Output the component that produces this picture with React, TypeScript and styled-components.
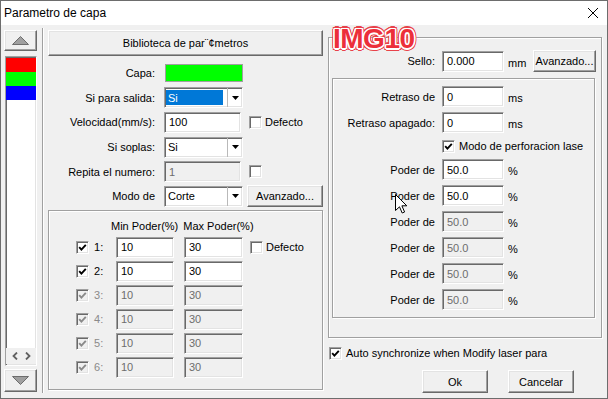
import React from 'react';
import styled, { createGlobalStyle, css } from 'styled-components';

const GlobalStyle = createGlobalStyle`
  html, body {
    margin: 0;
    padding: 0;
    background: #f0f0f0;
  }
  body {
    font-family: "Liberation Sans", Arial, sans-serif;
    font-size: 11px;
    color: #000;
  }
  * {
    box-sizing: border-box;
  }
`;

const sunken = css`
  border: 1px solid;
  border-color: #a0a0a0 #ffffff #ffffff #a0a0a0;
  box-shadow: inset 1px 1px 0 #696969, inset -1px -1px 0 #e3e3e3;
`;

const raised = css`
  border: 1px solid;
  border-color: #ffffff #696969 #696969 #ffffff;
  box-shadow: inset -1px -1px 0 #a0a0a0, inset 1px 1px 0 #e3e3e3;
  background: #f0f0f0;
`;

const etched = css`
  border: 1px solid #a0a0a0;
  box-shadow: inset 1px 1px 0 #ffffff, 1px 1px 0 #ffffff;
`;

const Window = styled.div`
  position: relative;
  width: 608px;
  height: 399px;
  border: 1px solid #6d6d6d;
  background: #f0f0f0;
  display: flex;
  flex-direction: column;
  overflow: hidden;
`;

const TitleBar = styled.div`
  height: 24px;
  flex: none;
  background: #fff;
  display: flex;
  align-items: center;
  padding: 0 9px 0 3px;
  font-size: 12px;
`;

const CloseIcon = styled.svg`
  margin-left: auto;
`;

const Body = styled.div`
  flex: 1;
  display: flex;
  min-height: 0;
`;

const LeftCol = styled.div`
  width: 41px;
  flex: none;
  padding: 5px 5px 0 3px;
  display: flex;
  flex-direction: column;
`;

const ArrowButton = styled.div<{ $h: number }>`
  ${raised}
  height: ${(p) => p.$h}px;
  display: flex;
  align-items: center;
  justify-content: center;
`;

const ListBox = styled.div`
  ${sunken}
  margin: 5px 0 3px 1px;
  width: 32px;
  height: 310px;
  background: #fff;
  display: flex;
  flex-direction: column;
  padding: 1px 0 1px 0;
`;

const LayerSwatch = styled.div<{ $color: string }>`
  height: 14px;
  background: ${(p) => p.$color};
`;

const ScrollStrip = styled.div`
  margin-top: auto;
  height: 16px;
  background: #f0f0f0;
  display: flex;
  align-items: center;
  justify-content: space-around;
  padding: 0 2px;
`;

const Separator = styled.div`
  width: 2px;
  flex: none;
  margin: 3px 0 5px 0;
  border-left: 1px solid #a0a0a0;
  border-right: 1px solid #ffffff;
`;

const MidCol = styled.div`
  width: 275px;
  flex: none;
  margin-left: 4px;
  display: flex;
  flex-direction: column;
`;

const RightCol = styled.div`
  width: 274px;
  flex: none;
  margin-left: 5px;
  display: flex;
  flex-direction: column;
`;

const PushButton = styled.button<{ $w?: number; $h?: number }>`
  ${raised}
  width: ${(p) => (p.$w ? `${p.$w}px` : '100%')};
  height: ${(p) => p.$h ?? 22}px;
  padding: 0;
  font: inherit;
  color: #000;
  flex: none;
  display: flex;
  align-items: center;
  justify-content: center;
`;

const LibButton = styled(PushButton)`
  margin-top: 5px;
`;

const FormGrid = styled.div`
  display: grid;
  grid-template-columns: 107px 1fr;
  grid-auto-rows: 24.6px;
  column-gap: 9px;
  align-items: center;
  margin-top: 5px;
`;

const Label = styled.div`
  text-align: right;
  white-space: nowrap;
`;

const FieldCell = styled.div`
  display: flex;
  align-items: center;
`;

const Swatch = styled.div`
  width: 78px;
  height: 18px;
  margin-left: 1px;
  background: #00ff00;
  border: 1px solid #a0a0a0;
`;

const Field = styled.div<{ $w: number; $disabled?: boolean }>`
  ${sunken}
  width: ${(p) => p.$w}px;
  height: 21px;
  flex: none;
  padding-left: 4px;
  display: flex;
  align-items: center;
  background: ${(p) => (p.$disabled ? '#f0f0f0' : '#fff')};
  color: ${(p) => (p.$disabled ? '#6d6d6d' : '#000')};
`;

const Combo = styled.div`
  ${sunken}
  width: 79px;
  height: 21px;
  flex: none;
  background: #fff;
  display: flex;
  padding: 2px 0 2px 1px;
`;

const ComboText = styled.div<{ $selected?: boolean }>`
  flex: 1;
  margin-right: 4px;
  padding-left: 2px;
  display: flex;
  align-items: center;
  background: ${(p) => (p.$selected ? '#0078d7' : 'transparent')};
  color: ${(p) => (p.$selected ? '#fff' : '#000')};
`;

const ComboArrow = styled.div`
  width: 15px;
  margin: -2px 0;
  border-left: 1px solid #b9b9b9;
  display: flex;
  align-items: center;
  justify-content: center;
`;

const Check = styled.div<{ $disabled?: boolean }>`
  ${sunken}
  width: 13px;
  height: 13px;
  flex: none;
  background: ${(p) => (p.$disabled ? '#f0f0f0' : '#fff')};
  display: flex;
  align-items: center;
  justify-content: center;
`;

const CheckText = styled.span<{ $gap?: number; $disabled?: boolean }>`
  margin-left: ${(p) => p.$gap ?? 4}px;
  white-space: nowrap;
  color: ${(p) => (p.$disabled ? '#6d6d6d' : '#000')};
`;

const Spacer = styled.span<{ $w: number }>`
  width: ${(p) => p.$w}px;
  flex: none;
`;

const PowerGroup = styled.div`
  ${etched}
  margin-top: 1.4px;
  width: 275px;
  height: 180px;
  padding-left: 27px;
`;

const PowerHeader = styled.div`
  height: 26px;
  padding-top: 4px;
  display: flex;
  align-items: center;
`;

const HeadCell = styled.div<{ $ml: number }>`
  margin-left: ${(p) => p.$ml}px;
  white-space: nowrap;
`;

const PowerRow = styled.div`
  height: 21px;
  margin-bottom: 3px;
  display: flex;
  align-items: center;
`;

const RowNum = styled.div<{ $disabled?: boolean }>`
  width: 27px;
  padding-left: 5px;
  color: ${(p) => (p.$disabled ? '#8a8a8a' : '#000')};
`;

const OuterGroup = styled.div`
  ${etched}
  margin-top: 12px;
  width: 274px;
  height: 301px;
  display: flex;
  flex-direction: column;
`;

const SelloRow = styled.div`
  margin-top: 12px;
  height: 22px;
  display: flex;
  align-items: center;
`;

const InnerGroup = styled.div`
  ${etched}
  margin: 6px 0 0 3px;
  width: 263px;
  height: 240px;
  padding-top: 7px;
  display: flex;
  flex-direction: column;
  gap: 5px;
`;

const ParamRow = styled.div`
  height: 21px;
  display: flex;
  align-items: center;
`;

const ParamLabel = styled.div<{ $w: number }>`
  width: ${(p) => p.$w}px;
  margin-right: 7px;
  text-align: right;
  white-space: nowrap;
`;

const Unit = styled.div<{ $w?: number }>`
  width: ${(p) => (p.$w ? `${p.$w}px` : 'auto')};
  padding: 3px 0 0 4px;
`;

const PerfRow = styled.div`
  height: 16px;
  display: flex;
  align-items: center;
  margin-left: 109px;
`;

const SyncRow = styled.div`
  margin: 8px 0 0 1px;
  height: 14px;
  display: flex;
  align-items: center;
`;

const ButtonRow = styled.div`
  margin-top: 10px;
  display: flex;
  justify-content: flex-end;
  gap: 20px;
  padding-right: 28px;
`;

const Watermark = styled.div`
  position: absolute;
  left: 332px;
  top: 24px;
  font-family: "Liberation Sans", Arial, sans-serif;
  font-weight: bold;
  font-size: 28px;
  line-height: 28px;
  letter-spacing: -0.5px;
  color: #ec2f3a;
  text-shadow:
    1.5px 0 0 #fff, -1.5px 0 0 #fff, 0 1.5px 0 #fff, 0 -1.5px 0 #fff,
    1.2px 1.2px 0 #fff, -1.2px 1.2px 0 #fff, 1.2px -1.2px 0 #fff, -1.2px -1.2px 0 #fff,
    2.6px 0 0 #e8424a, -2.6px 0 0 #e8424a, 0 2.6px 0 #e8424a, 0 -2.6px 0 #e8424a,
    2px 2px 0 #e8424a, -2px 2px 0 #e8424a, 2px -2px 0 #e8424a, -2px -2px 0 #e8424a;
`;

const Cursor = styled.svg`
  position: absolute;
  left: 394px;
  top: 193px;
`;

const CheckMark: React.FC<{ color?: string }> = ({ color = '#000' }) => (
  <svg width="9" height="9" viewBox="0 0 9 9">
    <path d="M1.2 4.2 L3.4 6.6 L7.8 1.8" stroke={color} strokeWidth="1.9" fill="none" />
  </svg>
);

const DownTri = () => (
  <svg width="7" height="4" viewBox="0 0 7 4">
    <polygon points="0,0 7,0 3.5,4" fill="#000" />
  </svg>
);

const CheckBox: React.FC<{ checked?: boolean; disabled?: boolean }> = ({ checked, disabled }) => (
  <Check $disabled={disabled}>{checked && <CheckMark color={disabled ? '#8a8a8a' : '#000'} />}</Check>
);

const powerRows = [1, 2, 3, 4, 5, 6];
const poderRows = [false, false, true, true, true, true];

export default function App() {
  return (
    <>
      <GlobalStyle />
      <Window>
        <TitleBar>
          <span>Parametro de capa</span>
          <CloseIcon width="10" height="10" viewBox="0 0 10 10">
            <path d="M0 0 L10 10 M10 0 L0 10" stroke="#000" strokeWidth="1" />
          </CloseIcon>
        </TitleBar>
        <Body>
          <LeftCol>
            <ArrowButton $h={21}>
              <svg width="17" height="9" viewBox="0 0 17 9">
                <polygon points="0.5,8.5 8.5,0.5 16.5,8.5" fill="#a0a0a0" stroke="#6d6d6d" />
              </svg>
            </ArrowButton>
            <ListBox>
              <LayerSwatch $color="#ff0000" />
              <LayerSwatch $color="#00ff00" />
              <LayerSwatch $color="#0000ff" />
              <ScrollStrip>
                <svg width="6" height="8" viewBox="0 0 6 8">
                  <path d="M5 0.5 L1.5 4 L5 7.5" stroke="#606060" strokeWidth="1.8" fill="none" />
                </svg>
                <svg width="6" height="8" viewBox="0 0 6 8">
                  <path d="M1 0.5 L4.5 4 L1 7.5" stroke="#606060" strokeWidth="1.8" fill="none" />
                </svg>
              </ScrollStrip>
            </ListBox>
            <ArrowButton $h={23}>
              <svg width="17" height="9" viewBox="0 0 17 9">
                <polygon points="0.5,0.5 16.5,0.5 8.5,8.5" fill="#a0a0a0" stroke="#6d6d6d" />
              </svg>
            </ArrowButton>
          </LeftCol>
          <Separator />
          <MidCol>
            <LibButton $h={26}>Biblioteca de par¨¢metros</LibButton>
            <FormGrid>
              <Label>Capa:</Label>
              <FieldCell>
                <Swatch />
              </FieldCell>

              <Label>Si para salida:</Label>
              <FieldCell>
                <Combo>
                  <ComboText $selected>Si</ComboText>
                  <ComboArrow>
                    <DownTri />
                  </ComboArrow>
                </Combo>
              </FieldCell>

              <Label>Velocidad(mm/s):</Label>
              <FieldCell>
                <Field $w={77}>100</Field>
                <Spacer $w={8} />
                <CheckBox />
                <CheckText $gap={3}>Defecto</CheckText>
              </FieldCell>

              <Label>Si soplas:</Label>
              <FieldCell>
                <Combo>
                  <ComboText>Si</ComboText>
                  <ComboArrow>
                    <DownTri />
                  </ComboArrow>
                </Combo>
              </FieldCell>

              <Label>Repita el numero:</Label>
              <FieldCell>
                <Field $w={77} $disabled>
                  1
                </Field>
                <Spacer $w={8} />
                <CheckBox />
              </FieldCell>

              <Label>Modo de</Label>
              <FieldCell>
                <Combo>
                  <ComboText>Corte</ComboText>
                  <ComboArrow>
                    <DownTri />
                  </ComboArrow>
                </Combo>
                <Spacer $w={4} />
                <PushButton $w={76}>Avanzado...</PushButton>
              </FieldCell>
            </FormGrid>

            <PowerGroup>
              <PowerHeader>
                <HeadCell $ml={35}>Min Poder(%)</HeadCell>
                <HeadCell $ml={5}>Max Poder(%)</HeadCell>
              </PowerHeader>
              {powerRows.map((n) => {
                const off = n > 2;
                return (
                  <PowerRow key={n}>
                    <CheckBox checked disabled={off} />
                    <RowNum $disabled={off}>{n}:</RowNum>
                    <Field $w={58} $disabled={off}>
                      10
                    </Field>
                    <Spacer $w={10} />
                    <Field $w={59} $disabled={off}>
                      30
                    </Field>
                    {n === 1 && (
                      <>
                        <Spacer $w={7} />
                        <CheckBox />
                        <CheckText $gap={3}>Defecto</CheckText>
                      </>
                    )}
                  </PowerRow>
                );
              })}
            </PowerGroup>
          </MidCol>

          <RightCol>
            <OuterGroup>
              <SelloRow>
                <ParamLabel $w={106}>Sello:</ParamLabel>
                <Field $w={62}>0.000</Field>
                <Unit $w={29}>mm</Unit>
                <PushButton $w={63}>Avanzado...</PushButton>
              </SelloRow>
              <InnerGroup>
                <ParamRow>
                  <ParamLabel $w={102}>Retraso de</ParamLabel>
                  <Field $w={62}>0</Field>
                  <Unit>ms</Unit>
                </ParamRow>
                <ParamRow>
                  <ParamLabel $w={102}>Retraso apagado:</ParamLabel>
                  <Field $w={62}>0</Field>
                  <Unit>ms</Unit>
                </ParamRow>
                <PerfRow>
                  <CheckBox checked />
                  <CheckText $gap={4}>Modo de perforacion lase</CheckText>
                </PerfRow>
                {poderRows.map((dis, i) => (
                  <ParamRow key={i}>
                    <ParamLabel $w={102}>Poder de</ParamLabel>
                    <Field $w={62} $disabled={dis}>
                      50.0
                    </Field>
                    <Unit>%</Unit>
                  </ParamRow>
                ))}
              </InnerGroup>
            </OuterGroup>
            <SyncRow>
              <CheckBox checked />
              <CheckText $gap={4}>Auto synchronize when Modify laser para</CheckText>
            </SyncRow>
            <ButtonRow>
              <PushButton $w={66} $h={23}>
                Ok
              </PushButton>
              <PushButton $w={66} $h={23}>
                Cancelar
              </PushButton>
            </ButtonRow>
          </RightCol>
        </Body>
        <Watermark>IMG10</Watermark>
        <Cursor width="13" height="20" viewBox="0 0 13 20">
          <path
            d="M0.5 0.5 L0.5 16.5 L4.5 12.8 L7.2 19 L9.6 18 L6.9 11.8 L11.8 11.8 Z"
            fill="#fff"
            stroke="#000"
            strokeWidth="1"
          />
        </Cursor>
      </Window>
    </>
  );
}
